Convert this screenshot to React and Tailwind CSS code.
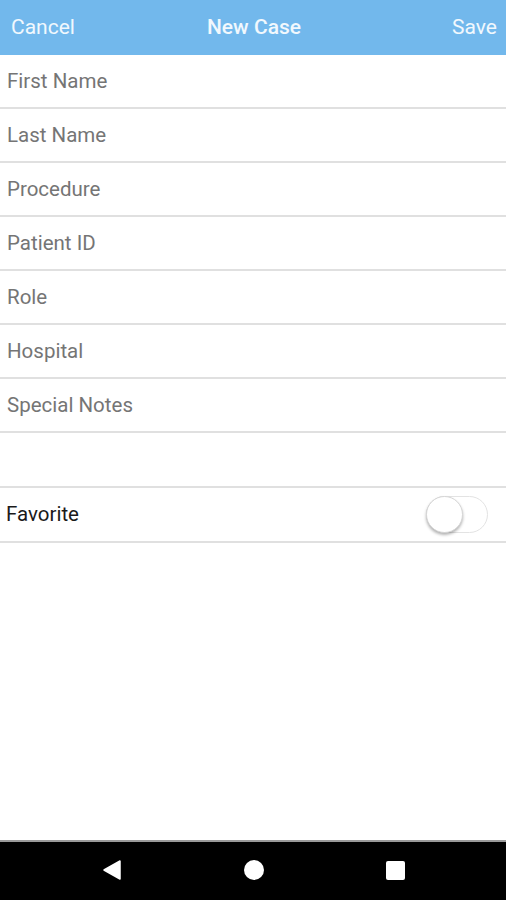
const fields = ['First Name', 'Last Name', 'Procedure', 'Patient ID', 'Role', 'Hospital', 'Special Notes'];

function Toggle() {
  return (
    <div className="relative w-[62px] h-[37px] rounded-full border border-[#e3e3e3] bg-white">
      <div className="absolute left-[-1px] top-[-1px] w-[37px] h-[37px] rounded-full bg-white border border-[#d6d6d6] shadow-[0_2px_3px_rgba(0,0,0,0.3)]" />
    </div>
  );
}

export default function App() {
  return (
    <div className="w-[506px] h-[900px] flex flex-col bg-white" style={{ fontFamily: 'Roboto, "Liberation Sans", sans-serif' }}>
      <div className="h-[55px] bg-[#72b8ec] grid grid-cols-3 items-center pl-[11px] pr-[9px] pt-[1px] text-[21px] text-white/90">
        <span>Cancel</span>
        <span className="font-medium text-center">New Case</span>
        <span className="text-right">Save</span>
      </div>
      {fields.map((f) => (
        <div key={f} className="h-[54px] flex items-center px-[7px] border-b-2 border-[#e0e0e0] text-[20.5px] text-[#757575]">
          {f}
        </div>
      ))}
      <div className="h-[55px] border-b-2 border-[#e0e0e0]" />
      <div className="h-[55px] flex items-center justify-between pl-[6px] pr-[18px] border-b-2 border-[#e0e0e0]">
        <span className="text-[20.5px] text-[#1a1a1a]">Favorite</span>
        <Toggle />
      </div>
      <div className="flex-1" />
      <div className="h-[60px] bg-black border-t-2 border-[#9a9a9a] flex items-center justify-center gap-[122px] pb-[2px]">
        <svg width="20" height="20" viewBox="0 0 20 20">
          <path d="M18 1 L18 19 L2 10 Z" fill="white" stroke="white" strokeWidth="1.5" strokeLinejoin="round" />
        </svg>
        <div className="w-[20px] h-[20px] rounded-full bg-white" />
        <div className="w-[19px] h-[19px] rounded-[2px] bg-white" />
      </div>
    </div>
  );
}
